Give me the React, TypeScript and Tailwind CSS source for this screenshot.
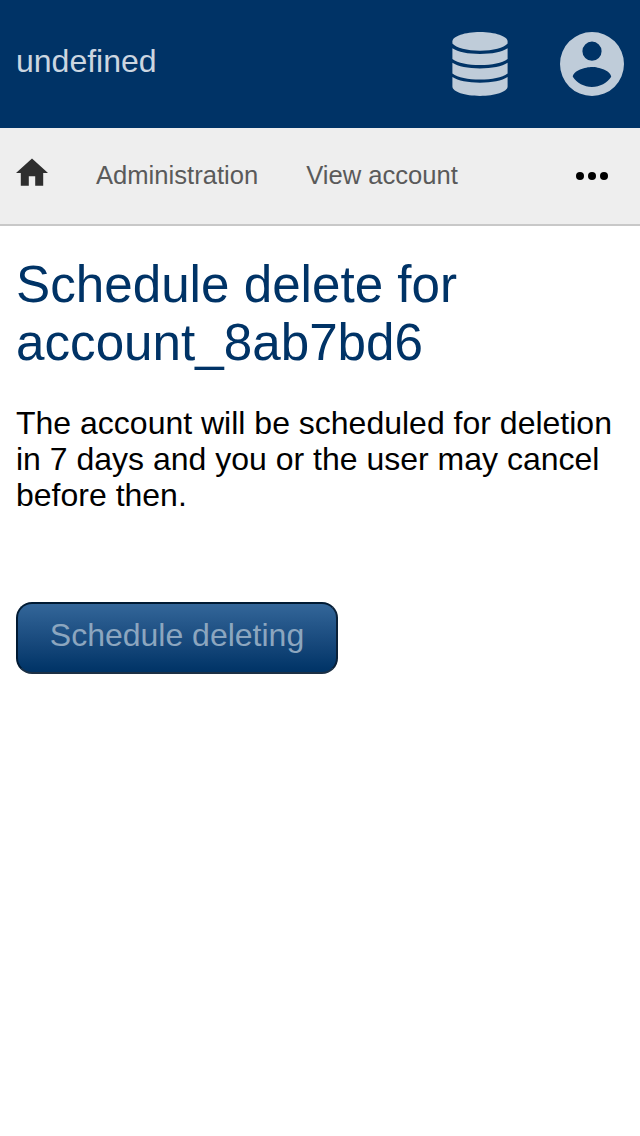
import React from "react";

function DatabaseIcon({ className }: { className?: string }) {
  return (
    <svg viewBox="0 0 56 64" fill="currentColor" className={className} aria-hidden="true">
      <path d="M28 0C43 0 55.6 4.2 55.6 9.4V11.5C52 16 41 18.7 28 18.7S4 16 .4 11.5V9.4C.4 4.2 13 0 28 0Z" />
      <path d="M.4 16.3C6 20 16 22 28 22S50 20 55.6 16.3V27C50 31 40 33 28 33S6 31 .4 27Z" />
      <path d="M.4 30.7C6 34.4 16 36.4 28 36.4S50 34.4 55.6 30.7V41.4C50 45.4 40 47.4 28 47.4S6 45.4 .4 41.4Z" />
      <path d="M.4 45.1C6 48.8 16 50.8 28 50.8S50 48.8 55.6 45.1V54.6C55.6 59.8 43 64 28 64S.4 59.8 .4 54.6Z" />
    </svg>
  );
}

function AccountIcon({ className }: { className?: string }) {
  return (
    <svg viewBox="2 2 20 20" fill="currentColor" className={className} aria-hidden="true">
      <path d="M12 19.2C9.5 19.2 7.29 17.92 6 16C6.03 14 10 12.9 12 12.9C14 12.9 17.97 14 18 16C16.71 17.92 14.5 19.2 12 19.2M12 5A3 3 0 0 1 15 8A3 3 0 0 1 12 11A3 3 0 0 1 9 8A3 3 0 0 1 12 5M12 2A10 10 0 0 0 2 12A10 10 0 0 0 12 22A10 10 0 0 0 22 12A10 10 0 0 0 12 2Z" />
    </svg>
  );
}

function HomeIcon({ className }: { className?: string }) {
  return (
    <svg viewBox="2 2 20 20" fill="currentColor" className={className} aria-hidden="true">
      <path d="M10 20V14H14V20H19V12H22L12 3L2 12H5V20H10Z" />
    </svg>
  );
}

function MoreIcon({ className }: { className?: string }) {
  return (
    <svg viewBox="0 0 32 8" fill="currentColor" className={className} aria-hidden="true">
      <circle cx="4" cy="4" r="4" />
      <circle cx="16" cy="4" r="4" />
      <circle cx="28" cy="4" r="4" />
    </svg>
  );
}

export default function App() {
  return (
    <div className="min-h-[1136px] bg-white font-['Liberation_Sans',Arial,sans-serif] text-black">
      <header className="flex h-32 items-center justify-between bg-[#003366] px-4 text-[#ccd6e0]">
        <span className="pb-1.5 text-[32px] leading-9">undefined</span>
        <div className="flex items-center gap-[52px] text-[#bfccd9]">
          <DatabaseIcon className="h-16 w-14" />
          <AccountIcon className="size-16" />
        </div>
      </header>
      <nav className="flex h-[98px] items-center border-b-2 border-[#c8c8c8] bg-[#eeeeee] pl-4 pr-8 text-[25.6px] leading-8 text-[#5a5a5a]">
        <HomeIcon className="mb-1.5 size-8 text-[#2e2e2e]" />
        <a className="mb-0.5 ml-12">Administration</a>
        <a className="mb-0.5 ml-12">View account</a>
        <MoreIcon className="ml-auto h-2 w-8 text-black" />
      </nav>
      <main className="px-4 pt-[30px]">
        <h1 className="text-[51.2px] leading-[58px] text-[#003366]">
          Schedule delete for account_8ab7bd6
        </h1>
        <p className="mt-[33px] text-[32px] leading-9">
          The account will be scheduled for deletion in 7 days and you or the user may cancel before then.
        </p>
        <button className="mt-[89px] h-[72px] w-[322px] rounded-2xl border-2 border-[#001a33] border-b-[#1c3045] border-r-[#0b2138] bg-linear-to-b from-[#336699] to-[#003366] pb-1.5 text-[32px] leading-9 text-[#8ca6bf]">
          Schedule deleting
        </button>
      </main>
    </div>
  );
}
